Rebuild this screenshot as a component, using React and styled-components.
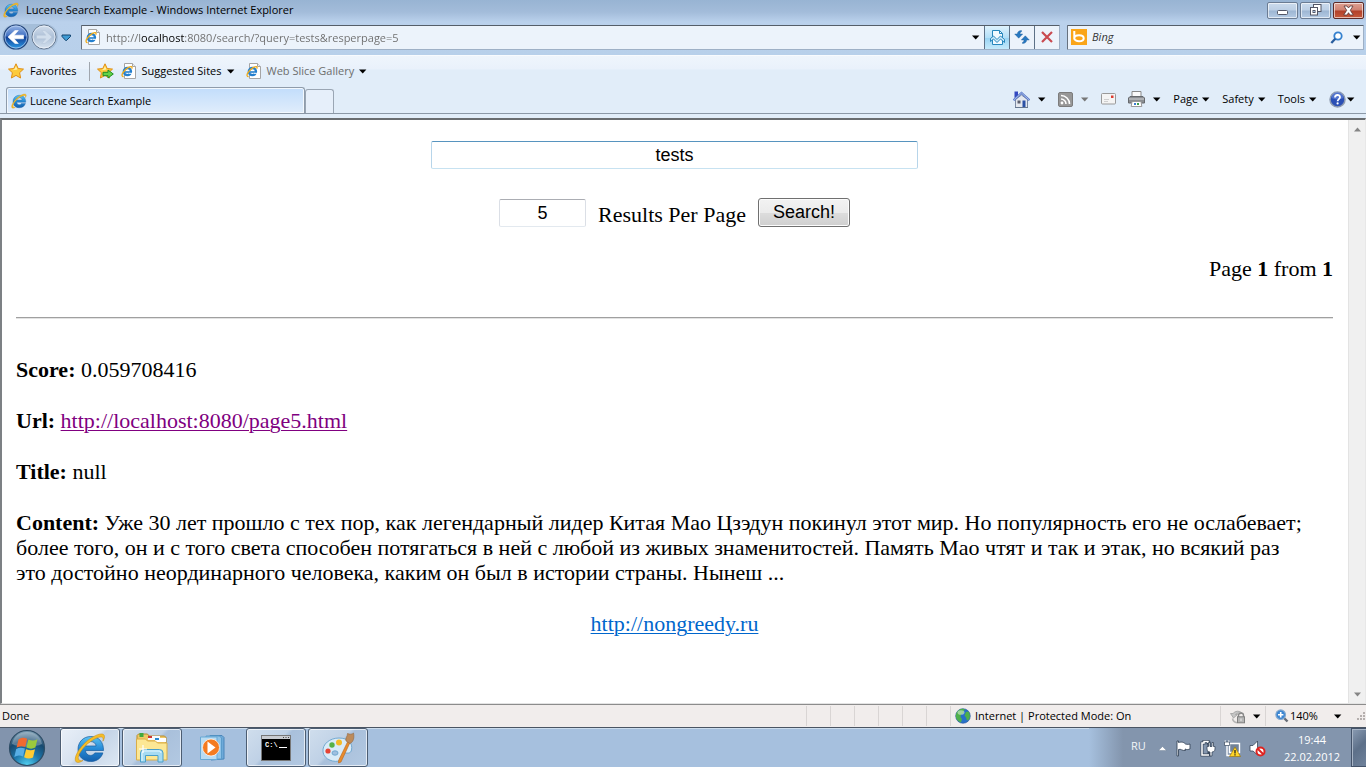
import React from "react";
import styled, { createGlobalStyle, css } from "styled-components";

const ui = `"Open Sans", "Noto Sans", sans-serif`;

const GlobalStyle = createGlobalStyle`
  * { box-sizing: border-box; }
  html, body { margin: 0; padding: 0; }
  body { background: #e1edf9; font: 11px/16px ${ui}; color: #000; }
  button, input { font: inherit; color: inherit; margin: 0; }
  svg { display: block; flex: none; }
`;

const Screen = styled.div`
  display: flex;
  flex-direction: column;
  min-height: 100vh;
`;

const Glass = styled.header`
  background: linear-gradient(#98b4d3 0, #a3bcda 12px, #bad1ec 22px, #b8d0ea 100%);
`;

const TitleBar = styled.div`
  display: flex;
  align-items: center;
  height: 22px;
  padding: 0 2px 2px 3px;
`;

const Title = styled.h1`
  flex: 1;
  margin: 0 0 0 7px;
  font: inherit;
`;

const WindowButton = styled.button`
  display: flex;
  align-items: center;
  justify-content: center;
  width: 31px;
  height: 17px;
  margin-left: 2px;
  padding: 0;
  border: 1px solid #6b7c93;
  border-radius: 2px;
  box-shadow: inset 0 0 0 1px rgba(255, 255, 255, 0.6);
  background: ${(p) =>
    p.$close
      ? "linear-gradient(#dfa193 0, #cf8272 7px, #b2402a 8px, #c65a3d 100%)"
      : "linear-gradient(#cbdbed 0, #bccfe5 7px, #9db6d3 8px, #b5cbe4 100%)"};
  ${(p) => p.$close && css`border-color: #5d2a28;`}
`;

const NavRow = styled.div`
  display: flex;
  align-items: center;
  height: 33px;
  padding: 0 2px 3px 2px;
`;

const IconButton = styled.button`
  display: flex;
  align-items: center;
  justify-content: center;
  padding: 0;
  border: 0;
  background: none;
`;

const NavPair = styled.div`
  display: flex;
  gap: 2px;
  padding: 0 1px;
  border-radius: 13px;
  background: rgba(160, 185, 213, 0.8);
`;

const Field = styled.div`
  display: flex;
  align-items: center;
  height: 25px;
  border: 1px solid;
  border-color: #555e69 #9eb0c6 #9eb0c6 #66717f;
  background: #ecf3fb;
  border-radius: 1px;
`;

const AddressField = styled(Field)`
  flex: 1;
  margin-left: 7px;
  padding-left: 3px;
`;

const AddressInput = styled.input`
  flex: 1;
  min-width: 0;
  height: 21px;
  margin-left: 5px;
  padding: 0;
  border: 0;
  outline: 0;
  color: transparent;
  caret-color: #000;
  background: linear-gradient(90deg, #6d6d6d 35px, #000 35px, #000 79px, #6d6d6d 79px);
  -webkit-background-clip: text;
  background-clip: text;
`;

const FieldButton = styled(IconButton)`
  width: 25px;
  height: 23px;
  border-left: 1px solid #5d7187;
  ${(p) => p.$lit && css`background: linear-gradient(#dff2fd, #b3e0f8 50%, #98d3f3 51%, #c5eafb);`}
`;

const SearchField = styled(Field)`
  width: 297px;
  margin-left: 7px;
  padding: 0 2px 0 3px;
`;

const BingInput = styled.input`
  flex: 1;
  min-width: 0;
  margin-left: 5px;
  padding: 0;
  border: 0;
  outline: 0;
  background: none;
  font-style: italic;
  &::placeholder { color: #333; opacity: 1; }
`;

const Bars = styled.nav`
  border-top: 1px solid #f8fbfe;
  background: linear-gradient(#eff5fc 0, #e9f1fb 13px, #e1edf9 14px, #e1edf9 100%);
`;

const FavoritesBar = styled.div`
  display: flex;
  align-items: center;
  height: 31px;
  padding: 0 8px 1px;
`;

const BarButton = styled.button`
  display: flex;
  align-items: center;
  gap: 5px;
  padding: 0;
  border: 0;
  background: none;
  color: ${(p) => (p.$dim ? "#6d6d6d" : "#000")};
`;

const BarRule = styled.span`
  width: 1px;
  height: 19px;
  margin: 0 7px 0 12px;
  background: #a0a6ae;
`;

const FavoriteLinks = styled.div`
  display: flex;
  gap: 11px;
  margin-left: 7px;
`;

const TabRow = styled.div`
  display: flex;
  align-items: flex-end;
  height: 27px;
  padding: 0 11px 0 6px;
  border-bottom: 1px solid #8b98a6;
`;

const Tab = styled.button`
  display: flex;
  align-items: center;
  gap: 3px;
  width: 299px;
  height: 26px;
  padding: 0 4px;
  border: 1px solid #8f9cab;
  border-bottom: 0;
  border-radius: 3px 3px 0 0;
  box-shadow: inset 0 0 0 1px #f2f8fe;
  background: linear-gradient(#c2ddfb, #e0edfb);
`;

const NewTab = styled.button`
  width: 29px;
  height: 24px;
  padding: 0;
  border: 1px solid #9aa6b4;
  border-bottom: 0;
  border-radius: 3px 3px 0 0;
  background: #e6effa;
`;

const CommandBar = styled.div`
  display: flex;
  align-items: center;
  height: 26px;
  margin-left: auto;
  padding-bottom: 2px;
  gap: 12px;
`;

const CommandButton = styled(BarButton)`
  gap: ${(p) => (p.$wide ? 8 : p.$tight ? 1 : 4)}px;
`;

const Frame = styled.main`
  flex: 1;
  display: flex;
  margin-top: 4px;
  border: 1px solid #7c8084;
  border-top: 2px solid #696d70;
  border-right-color: #e8e8e8;
  border-bottom-color: #e3e3e3;
  border-left-width: 2px;
  background: #fff;
`;

const Page = styled.div`
  flex: 1;
  min-width: 0;
  padding: 21px 15px 14px 14px;
  font: 22px/25px "Liberation Serif", serif;
`;

const ScrollTrack = styled.div`
  display: flex;
  flex-direction: column;
  justify-content: space-between;
  width: 17px;
  padding: 3px 0;
  border-left: 1px solid #e3e3e3;
  background: #f0f0f0;
`;

const ScrollButton = styled(IconButton)`
  height: 12px;
`;

const SearchForm = styled.form`
  display: flex;
  flex-direction: column;
  align-items: center;
  gap: 29px;
  font: 18px/22px "Liberation Sans", sans-serif;
`;

const TextBox = styled.input`
  width: ${(p) => (p.$small ? 87 : 487)}px;
  height: 28px;
  padding: 0 2px;
  border: 1px solid;
  border-color: ${(p) => (p.$small ? "#abadb3 #dbdfe6 #e3e9ef #dbdfe6" : "#5794bf #b7d5ea #c7e2f1 #b7d5ea")};
  border-radius: 2px;
  outline: 0;
  text-align: center;
`;

const FormRow = styled.div`
  display: flex;
  align-items: flex-end;
  gap: 12px;
`;

const Label = styled.label`
  font: 22px/25px "Liberation Serif", serif;
`;

const Submit = styled.button`
  width: 92px;
  height: 29px;
  padding: 0 0 2px;
  border: 1px solid #707070;
  border-radius: 3px;
  box-shadow: inset 0 0 0 1px #fcfcfc;
  background: linear-gradient(#f2f2f2, #ebebeb 50%, #dddddd 51%, #cfcfcf);
`;

const Pager = styled.p`
  margin: 29px 0 36px;
  text-align: right;
`;

const Divider = styled.hr`
  height: 2px;
  margin: 0;
  border: 0;
  border-top: 1px solid #a0a0a0;
  border-bottom: 1px solid #e3e3e3;
`;

const Results = styled.section`
  display: flex;
  flex-direction: column;
  gap: 26px;
  margin-top: 38px;
`;

const Line = styled.p`
  margin: 0;
  text-align: ${(p) => (p.$center ? "center" : "left")};
`;

const Excerpt = styled(Line)`
  padding-right: 24px;
`;

const Link = styled.a`
  color: ${(p) => (p.$visited ? "#800080" : "#0066cc")};
  text-decoration: underline;
  text-decoration-thickness: 1px;
  text-underline-offset: 2px;
`;

const StatusBar = styled.footer`
  display: flex;
  align-items: center;
  height: 23px;
  border-top: 1px solid #8c8c8c;
  background: #f1edec;
`;

const StatusText = styled.span`
  flex: 1;
  padding-left: 2px;
`;

const StatusCell = styled.div`
  display: flex;
  align-items: center;
  gap: 4px;
  width: ${(p) => p.$w || 24}px;
  height: 20px;
  padding-left: ${(p) => (p.$w ? 4 : 0)}px;
  border-left: 1px solid #d9d5d4;
`;

const StatusButton = styled(BarButton)`
  gap: ${(p) => p.$gap}px;
  padding-left: 5px;
`;

const Taskbar = styled.footer`
  display: flex;
  height: 40px;
  border-top: 1px solid #4b5563;
  box-shadow: inset 0 1px 0 #cbdced;
  background: #a6c0de;
`;

const StartZone = styled.div`
  display: flex;
  align-items: center;
  width: 60px;
  padding-left: 8px;
  background: #8294ad;
`;

const Tasks = styled.div`
  flex: 1;
  display: flex;
  gap: 2px;
`;

const TaskButton = styled.button`
  display: flex;
  align-items: center;
  justify-content: center;
  width: 60px;
  height: 39px;
  padding: 0;
  border: 1px solid transparent;
  border-radius: 3px;
  background: none;
  ${(p) =>
    p.$open &&
    css`
      border-color: #4c5d72;
      box-shadow: inset 0 0 0 1px rgba(255, 255, 255, 0.65);
      background: ${p.$active
        ? "linear-gradient(135deg, #e9f0f8 0, #d7e2ef 45%, #c3d3e6 50%, #dde8f4 100%)"
        : "linear-gradient(135deg, #d0deed 0, #bfd1e6 45%, #a9c0db 50%, #b3c9e2 100%)"};
    `}
`;

const Tray = styled.div`
  display: flex;
  align-items: center;
  padding-left: 42px;
  color: #fff;
  background: linear-gradient(90deg, #a6c0de 0, #8395ad 34px, #8395ad 100%);
`;

const Language = styled.button`
  width: 27px;
  padding: 0 0 4px;
  border: 0;
  background: none;
  color: #f2f5f9;
  text-align: left;
`;

const TrayIcons = styled.div`
  display: flex;
  align-items: center;
  gap: 8px;
  margin-top: 2px;
`;

const Clock = styled.time`
  width: 85px;
  padding-left: 7px;
  line-height: 17px;
  text-align: center;
`;

const ShowDesktop = styled.button`
  width: 15px;
  height: 39px;
  padding: 0;
  border: 1px solid #44536a;
  border-right: 0;
  box-shadow: inset 1px 1px 0 #a8b5c6;
  background: linear-gradient(135deg, #8b9cb3, #5d7089 50%, #6f829b);
`;

const Caret = ({ color = "#000" }) => (
  <svg width="8" height="5" viewBox="0 0 8 5"><path d="M0 .5h7.4L3.7 4.5z" fill={color} /></svg>
);

const IeLogo = ({ size = 16 }) => (
  <svg width={size} height={size} viewBox="0 0 32 32">
    <defs>
      <linearGradient id="ieBlue" x1="0" y1="0" x2="0" y2="1">
        <stop offset="0" stopColor="#5cc3f2" /><stop offset=".5" stopColor="#2489d6" /><stop offset="1" stopColor="#1560ad" />
      </linearGradient>
    </defs>
    <path d="M29.5 18.5H11.4c.3 3 2.2 4.9 5 4.9 2 0 3.500-.9 4.400-2.500h8.100C27.200 26.200 22.800 29.500 16.700 29.500 9.100 29.500 4 24.500 4 17.300 4 9.900 9.400 4.500 16.800 4.500c8 0 12.900 5.600 12.700 14zM11.500 14h10.600c-.3-2.700-2.300-4.400-5.200-4.400S12.100 11.300 11.500 14z" fill="url(#ieBlue)" stroke="#175b9e" strokeWidth=".7" />
    <path d="M9 28.500C5 31.300 1.800 31 1.300 28.300.3 23.200 7.500 12.300 17.500 5.800 23.500 1.900 29 .8 30.200 3.300c.7 1.600.1 3.700-1.300 5.900.4-2 .3-3.300-.7-3.900-2-1.100-7 .9-11.700 4.300C8.700 15.200 3.300 23.500 4.400 27c.6 1.700 2.300 2 4.600 1.500z" fill="#f5bd27" stroke="#c98b10" strokeWidth=".5" />
  </svg>
);

const IePage = () => (
  <svg width="16" height="16" viewBox="0 0 16 16">
    <path d="M3.500 .5h8l3 3v12h-11z" fill="#fff" stroke="#a5a5a5" />
    <path d="M11.500 .5v3h3" fill="#eee" stroke="#a5a5a5" />
    <circle cx="6.400" cy="8.600" r="3.600" fill="none" stroke="#247fce" strokeWidth="2.300" />
    <path d="M3 9h8" stroke="#247fce" strokeWidth="1.600" /><path d="M8 10.300h3" stroke="#fff" strokeWidth="1" />
    <path d="M2.600 13.600C-1 13.500 2 7.500 7.500 4.400 10 3 11.800 3.300 10.700 5.700" fill="none" stroke="#efac1c" strokeWidth="1.300" />
  </svg>
);

const BackIcon = () => (
  <svg width="26" height="26" viewBox="0 0 26 26">
    <defs><linearGradient id="backBlue" x1="0" y1="0" x2="0" y2="1">
      <stop offset="0" stopColor="#9ab7e8" /><stop offset=".46" stopColor="#3f6fc1" /><stop offset=".5" stopColor="#123e94" /><stop offset="1" stopColor="#2b9ce8" />
    </linearGradient></defs>
    <circle cx="13" cy="13" r="12" fill="url(#backBlue)" stroke="#24467c" strokeWidth="1.200" />
    <circle cx="13" cy="13" r="11" fill="none" stroke="#bcd2f2" strokeWidth=".7" />
    <path d="M5 13l7-6.500h3.300L11.200 11.200H20.500v3.600H11.200l4.100 4.700H12z" fill="#fff" stroke="#fff" strokeWidth=".6" />
  </svg>
);

const ForwardIcon = () => (
  <svg width="26" height="26" viewBox="0 0 26 26">
    <defs><linearGradient id="fwdGrey" x1="0" y1="0" x2="0" y2="1">
      <stop offset="0" stopColor="#d3dfed" /><stop offset=".5" stopColor="#adc0d7" /><stop offset="1" stopColor="#d8e4f0" />
    </linearGradient></defs>
    <circle cx="13" cy="13" r="12" fill="url(#fwdGrey)" stroke="#66788f" strokeWidth="1" />
    <circle cx="13" cy="13" r="11" fill="none" stroke="#edf3fa" strokeWidth=".8" />
    <path d="M21 13l-7-6.500h-3.300l4.100 4.700H5.500v3.600h9.300l-4.100 4.700H14z" fill="#d1deec" stroke="#b4c5d9" strokeWidth=".5" />
  </svg>
);

const Star = ({ add }) => (
  <svg width="17" height="16" viewBox="0 0 17 16">
    <path d="M8 .8l2.200 4.700 5.300.6-3.900 3.600 1 5.300L8 12.400 3.400 15l1-5.300L.5 6.100l5.300-.6z" fill="#fdcb3b" stroke="#e08e16" />
    <path d="M8 3l1.400 3.400-5 .8L6.500 6z" fill="#fff0a8" />
    {add && <path d="M6 9.300h5V7l5.300 4-5.300 4v-2.300H6z" fill="#62d34a" stroke="#218c22" />}
  </svg>
);

const Compat = () => (
  <svg width="17" height="17" viewBox="0 0 17 17" fill="none" stroke="#2787bd">
    <path d="M3.500 1.500h7l3 3v11h-10z" fill="#f2faff" />
    <path d="M10.500 1.500v3h3" />
    <path d="M1.500 9.500l3-2.500 3.500 3.500L11.500 7l4 3.500v3L11.500 10 8 13.500 4.500 10l-3 2.500z" fill="#cdeafa" />
  </svg>
);

const Refresh = () => (
  <svg width="16" height="16" viewBox="0 0 16 16" fill="#2878c0" stroke="#185a9b" strokeWidth=".4">
    <path d="M7.500 1.500C5 1.500 3.500 2.800 3.300 5H.7l4 4.200L8.700 5H6c0-1.200.5-1.900 1.500-2.300z" />
    <path d="M8.500 14.500c2.500 0 4-1.300 4.200-3.500h2.600l-4-4.200L7.300 11H10c0 1.200-.5 1.900-1.500 2.300z" />
  </svg>
);

const Stop = () => (
  <svg width="14" height="14" viewBox="0 0 14 14"><path d="M2 2l10 10M12 2L2 12" stroke="#c94a50" strokeWidth="2.200" /></svg>
);

const Bing = () => (
  <svg width="16" height="16" viewBox="0 0 16 16">
    <rect width="16" height="16" fill="#faa519" />
    <path d="M3.300 2v8.300M3.300 9.200c0-4 9.400-4 9.400 0s-9.400 4-9.400 0z" fill="none" stroke="#fff" strokeWidth="2" />
  </svg>
);

const Magnifier = () => (
  <svg width="13" height="13" viewBox="0 0 13 13" fill="none">
    <circle cx="8" cy="5" r="3.700" fill="#fff" stroke="#3481cf" strokeWidth="1.800" /><path d="M5.300 7.800L1.300 12" stroke="#285d9e" strokeWidth="2.300" />
  </svg>
);

const Minimize = () => (
  <svg width="12" height="11" viewBox="0 0 12 11"><rect x=".5" y="5.500" width="10" height="4" rx="1" fill="#fff" stroke="#535666" /></svg>
);
const Restore = () => (
  <svg width="13" height="12" viewBox="0 0 13 12" fill="#fff" stroke="#535666">
    <rect x="4.500" y=".5" width="7.500" height="7" /><rect x="1.500" y="3.500" width="7" height="7.500" /><rect x="4" y="6.500" width="2" height="2" fill="#9eb7d4" />
  </svg>
);
const Close = () => (
  <svg width="13" height="11" viewBox="0 0 13 11">
    <path d="M2 1h3l1.500 2L8 1h3L8.300 5.300 11.300 10H8L6.500 7.700 5 10H1.700l3-4.700z" fill="#fff" stroke="#573234" strokeWidth=".8" />
  </svg>
);

const Home = () => (
  <svg width="17" height="17" viewBox="0 0 17 17">
    <path d="M2.500 8.500L8.500 4l6 4.500v8h-12z" fill="#e4e8ef" stroke="#7c8aa3" />
    <path d="M1.500 .5h3.500v4L1.500 7z" fill="#3348c0" />
    <path d="M.5 9.300L8.500 2l8 7.300" fill="none" stroke="#5a78c8" strokeWidth="2.200" />
    <path d="M.5 9.300L8.500 2l8 7.300" fill="none" stroke="#c4d4f5" strokeWidth=".7" />
    <path d="M9.500 9.500h3V16h-3z" fill="#2b51a5" /><path d="M4.500 9.500h3v3h-3z" fill="#5c606e" />
    <path d="M2 16.500h13" stroke="#65778f" />
  </svg>
);
const Feed = () => (
  <svg width="15" height="15" viewBox="0 0 15 15">
    <rect x=".5" y=".5" width="14" height="14" rx="1.500" fill="#979797" stroke="#7c7c7c" />
    <circle cx="4" cy="11" r="1.400" fill="#fff" /><path d="M3 7a5 5 0 015 5M3 3.500a8.500 8.500 0 018.500 8.500" fill="none" stroke="#fff" strokeWidth="1.600" />
  </svg>
);
const Mail = () => (
  <svg width="15" height="12" viewBox="0 0 15 12">
    <rect x=".5" y=".5" width="14" height="10.500" rx="1" fill="#f4f4f4" stroke="#999" /><path d="M10 2.500h2.500V5H10z" fill="#dd3c32" /><path d="M3 6.500h5M3 8.500h4" stroke="#cfcfcf" />
  </svg>
);
const Printer = () => (
  <svg width="17" height="16" viewBox="0 0 17 16">
    <path d="M4 .5h9V6H4z" fill="#fafafa" stroke="#888" /><path d="M.5 7L2 5.500h13L16.500 7v5H.5z" fill="#8b8e92" stroke="#66696d" />
    <path d="M1 8h15" stroke="#d3d5d8" /><path d="M4 10.500h9l.8 5H3.200z" fill="#fff" stroke="#999" />
    <path d="M6 12h2v2H6z" fill="#3a7bd0" /><path d="M9 12h2v2H9z" fill="#3d9c4d" />
  </svg>
);
const Help = () => (
  <svg width="17" height="17" viewBox="0 0 17 17">
    <circle cx="8.500" cy="8.500" r="7.500" fill="#2a4fb5" stroke="#8e9bb0" strokeWidth="1.500" />
    <path d="M2.500 7a6 6 0 0112 0c-3 1.500-8 2-12 0z" fill="#6c8ce0" opacity=".6" />
    <path d="M6 6.500c0-3.300 5-3.300 5-.3 0 1.800-2.400 2-2.400 4" fill="none" stroke="#fff" strokeWidth="1.800" /><circle cx="8.600" cy="12.400" r="1.100" fill="#fff" />
  </svg>
);

const ScrollArrow = ({ down }) => (
  <svg width="7" height="5" viewBox="0 0 7 5"><path d={down ? "M0 .5h7L3.500 4.500z" : "M0 4.500h7L3.500 .5z"} fill="#858585" /></svg>
);

const Globe = () => (
  <svg width="16" height="16" viewBox="0 0 16 16">
    <circle cx="8" cy="8" r="7.300" fill="#2870c8" stroke="#27569a" strokeWidth=".6" />
    <path d="M4 2C6 .5 9 .6 10 1.500L8.500 3.500 9 5 6 6.500 5.500 9 7 11l-1 3.500C3 13.500.8 11 .8 8c0-2 1-4.500 3.200-6zM11 4l2.500-.5c1.500 2 2 5.500.5 8l-2 1-1-3-1.500-2z" fill="#4fb04b" />
    <ellipse cx="6" cy="4.500" rx="3.500" ry="2.300" fill="#fff" opacity=".45" />
  </svg>
);
const PrivacyLock = () => (
  <svg width="16" height="15" viewBox="0 0 16 15">
    <path d="M12 4A6 6 0 003 4.500L.5 4.500 3.500 9l4-3.500H5.500C7 3.500 9.500 4 11 5z" fill="#c5c5c5" stroke="#9e9e9e" strokeWidth=".8" />
    <path d="M2.500 9.500C3 12 5 13.500 7 13.800" fill="none" stroke="#b5b5b5" strokeWidth="1.500" />
    <path d="M8.500 8V6.500a2.500 2.500 0 015 0V8" fill="none" stroke="#888" strokeWidth="1.400" /><rect x="7.500" y="7.800" width="7" height="6" fill="#b5b5b5" stroke="#808080" /><path d="M11 9.500v2.500" stroke="#eee" />
  </svg>
);
const ZoomIcon = () => (
  <svg width="14" height="14" viewBox="0 0 14 14">
    <path d="M8.500 8.500l4 4" stroke="#666b75" strokeWidth="2.400" /><circle cx="5.700" cy="5.700" r="4.800" fill="#3c86d2" stroke="#85a9cf" strokeWidth="1.200" /><path d="M3 5.700h5.400M5.700 3v5.400" stroke="#fff" strokeWidth="1.600" />
  </svg>
);
const Grip = () => (
  <svg width="9" height="9" viewBox="0 0 9 9" fill="#b5afae"><path d="M6 0h2v2H6zM3 3h2v2H3zM6 3h2v2H6zM0 6h2v2H0zM3 6h2v2H3zM6 6h2v2H6z" /></svg>
);

const StartOrb = () => (
  <svg width="38" height="38" viewBox="0 0 38 38">
    <defs><radialGradient id="orb" cx=".5" cy="1" r=".95">
      <stop offset="0" stopColor="#54d3f3" /><stop offset=".4" stopColor="#1d78ad" /><stop offset=".75" stopColor="#17496f" /><stop offset="1" stopColor="#7093ab" />
    </radialGradient></defs>
    <circle cx="19" cy="19" r="17.500" fill="url(#orb)" stroke="#2d4c65" strokeWidth="1.200" />
    <path d="M4 15C5.500 7 12 3 19 3s13.500 4 15 12c-6 3.500-24 3.500-30 0z" fill="#fff" opacity=".28" />
    <path d="M10.500 10.500c2.700-1.900 5.300-2.200 8.700-.7l-2 8.200c-3.200-1.400-5.900-1-8.600.6z" fill="#ef6a31" />
    <path d="M20.400 10.400c3.300 1.500 6 1.500 9-.2l-2 8.300c-3 1.600-5.800 1.500-9 0z" fill="#9bca3c" />
    <path d="M8.200 20.100c2.800-1.700 5.400-1.900 8.700-.5L15 27.500c-3.200-1.500-5.900-1.300-8.700.5z" fill="#58aee5" />
    <path d="M18.100 20.200c3.100 1.500 5.900 1.600 8.900 0l-2 8.200c-2.900 1.600-5.700 1.400-8.900-.1z" fill="#fecb33" />
  </svg>
);
const Explorer = () => (
  <svg width="34" height="32" viewBox="0 0 34 32">
    <path d="M2 5V3.500L3.500 2h9L14 4h15.500L31 5.500V27H2z" fill="#efc967" stroke="#b88c2d" />
    <path d="M4.500 1h4v4h-4z" fill="#41a83e" /><path d="M13 4h12v4H13z" fill="#f7fafc" /><path d="M13 4h4v2h-4z" fill="#cf3530" /><path d="M20 6h11v4H20z" fill="#fff" /><path d="M20 6h4v2h-4z" fill="#2687d2" />
    <path d="M1.500 7h9l2 2h8l2 2h9.500v17h-30.500z" fill="#fce794" stroke="#d9ad48" />
    <path d="M5.500 30V21q0-3.500 3.500-3.500h15.500q3.500 0 3.500 3.500v9h-5v-6.500h-12.500V30z" fill="#a6dbf2" stroke="#4a9fc9" />
    <path d="M7 29v-8q0-2 2-2h15q2 0 2 2" fill="none" stroke="#e6f8ff" />
    <path d="M8 13v8M4 17h8" stroke="#fff" strokeWidth="1.200" />
  </svg>
);
const MediaPlayer = () => (
  <svg width="32" height="28" viewBox="0 0 32 28">
    <path d="M12 1.500h12l2 2V25l-13 1z" fill="#6eaad9" stroke="#4a86ba" /><path d="M8 2h13.500l2 2v21H8z" fill="#8fc3e8" stroke="#5b9ccb" />
    <path d="M2.500 3H19v22.500H2.500z" fill="#b9dcf3" stroke="#69a9d5" />
    <circle cx="13" cy="13.500" r="8.500" fill="#f47b20" stroke="#fff" strokeWidth=".7" /><path d="M9.500 7.500l8 6-8 6z" fill="#fff" />
  </svg>
);
const Console = () => (
  <svg width="30" height="26" viewBox="0 0 30 26">
    <rect x=".5" y=".5" width="29" height="25" fill="#000" stroke="#777" /><path d="M1 1h28v3H1z" fill="#c9ccd1" /><path d="M22 2.500h1M24.500 2.500h1M27 2.500h1" stroke="#444" />
    <text x="4" y="12" fill="#fff" fontFamily="Liberation Mono" fontSize="7" fontWeight="bold">C:\</text><path d="M18 12.500h8" stroke="#fff" />
  </svg>
);
const Paint = () => (
  <svg width="34" height="32" viewBox="0 0 34 32">
    <path d="M2 20C1 12 9 6 18 6s14 5 12.500 12c-1 4-4 3-6.500 3-4 0-2 5-5 7.500C14 31 3 28 2 20z" fill="#d9ebf8" stroke="#72a9d0" />
    <ellipse cx="14" cy="21" rx="3" ry="2.200" fill="#9fbfe0" stroke="#72a9d0" />
    <circle cx="7" cy="19" r="2.600" fill="#e54434" /><circle cx="11" cy="13" r="2.700" fill="#56b146" /><circle cx="18" cy="10.500" r="3" fill="#f5ba27" />
    <path d="M27 9l2 1.500L20 30l-2.500 1 .2-2.800z" fill="#e88b2c" stroke="#b86518" strokeWidth=".6" />
    <path d="M25 9c-1-3 1.500-4 1.500-7.500C29 2.500 31 2.500 32.500 1c1 4.500 0 9-3.500 10.500z" fill="#bd8b5b" stroke="#94673e" strokeWidth=".6" />
  </svg>
);

const TrayArrow = () => (
  <svg width="9" height="5" viewBox="0 0 9 5"><path d="M.5 4.500L4.500 .5l4 4z" fill="#fff" stroke="#63748c" strokeWidth=".4" /></svg>
);
const Flag = () => (
  <svg width="17" height="17" viewBox="0 0 17 17"><path d="M2 1v15h1.500V9.500c2.500-1 3.500 1.500 7 1l-.5-1.500c2 1 3.500.5 5 0V4c-2 .5-2.500.5-4.500 0C8 1.500 6 2 3.500 2.500V1z" fill="#fff" stroke="#38475b" strokeWidth=".9" /></svg>
);
const Power = () => (
  <svg width="16" height="17" viewBox="0 0 16 17">
    <path d="M2 3h2V1.500h4V3h1v12H2z" fill="none" stroke="#38475b" strokeWidth="3" /><path d="M9 15H2V3h2V1.500h4V3" fill="none" stroke="#fff" strokeWidth="1.500" />
    <path d="M7 6.500V9c0 2 1.300 3 3 3v4h2v-4c1.700 0 3-1 3-3V6.500h-1.500v-4H12v4h-2v-4H8.500v4z" fill="#fff" stroke="#38475b" strokeWidth=".8" />
  </svg>
);
const Network = () => (
  <svg width="17" height="17" viewBox="0 0 17 17">
    <path d="M5.500 3.500h10v9h-10z" fill="#718399" stroke="#fff" strokeWidth="1.400" /><path d="M3 4v11.500h5" fill="none" stroke="#fff" strokeWidth="1.400" /><path d="M1.300 .5v2M4.700 .5v2" stroke="#fff" strokeWidth="1.300" /><path d="M.5 2h5v3.500h-5z" fill="#fff" stroke="#38475b" strokeWidth=".7" />
    <path d="M11 7l5.500 9.500h-11z" fill="#ffd527" stroke="#9a7410" strokeWidth=".7" /><path d="M11 10v3.500M11 14.300v1.200" stroke="#222" strokeWidth="1.300" />
  </svg>
);
const Muted = () => (
  <svg width="17" height="17" viewBox="0 0 17 17">
    <path d="M1 5.500h3L8.500 1v14L4 11H1z" fill="#fff" stroke="#38475b" strokeWidth=".8" />
    <circle cx="11.500" cy="11.500" r="4" fill="#fff" stroke="#df2320" strokeWidth="2" /><path d="M8.800 8.800l5.500 5.500" stroke="#df2320" strokeWidth="2" />
  </svg>
);

export default function App() {
  return (
    <Screen>
      <GlobalStyle />
      <Glass>
        <TitleBar>
          <IeLogo />
          <Title>Lucene Search Example - Windows Internet Explorer</Title>
          <WindowButton aria-label="Minimize"><Minimize /></WindowButton>
          <WindowButton aria-label="Restore"><Restore /></WindowButton>
          <WindowButton $close aria-label="Close"><Close /></WindowButton>
        </TitleBar>
        <NavRow>
          <NavPair>
            <IconButton aria-label="Back"><BackIcon /></IconButton>
            <IconButton aria-label="Forward"><ForwardIcon /></IconButton>
          </NavPair>
          <IconButton aria-label="Recent pages">
            <svg width="16" height="9" viewBox="0 0 16 9"><path d="M4 2h8.500v1.500L8.500 7.500h-.8L4 3.500z" fill="#3f9bd4" stroke="#12446f" strokeWidth="1" /></svg>
          </IconButton>
          <AddressField>
            <IePage />
            <AddressInput aria-label="Address" defaultValue="http://localhost:8080/search/?query=tests&amp;resperpage=5" />
            <IconButton aria-label="Show address list"><svg width="14" height="5" viewBox="0 0 14 5"><path d="M2 .5h7.400L5.700 4.500z" /></svg></IconButton>
            <FieldButton $lit aria-label="Compatibility View"><Compat /></FieldButton>
            <FieldButton aria-label="Refresh"><Refresh /></FieldButton>
            <FieldButton aria-label="Stop"><Stop /></FieldButton>
          </AddressField>
          <SearchField>
            <Bing />
            <BingInput aria-label="Search the web" placeholder="Bing" />
            <IconButton aria-label="Search"><Magnifier /></IconButton>
            <IconButton aria-label="Search options"><svg width="18" height="5" viewBox="0 0 18 5"><path d="M10 .5h7.400L13.700 4.500z" /></svg></IconButton>
          </SearchField>
        </NavRow>
      </Glass>

      <Bars>
        <FavoritesBar>
          <BarButton $tight><Star />Favorites</BarButton>
          <BarRule />
          <IconButton aria-label="Add to Favorites Bar"><Star add /></IconButton>
          <FavoriteLinks>
            <BarButton><IePage />Suggested Sites<Caret /></BarButton>
            <BarButton $dim><IePage />Web Slice Gallery<Caret /></BarButton>
          </FavoriteLinks>
        </FavoritesBar>
        <TabRow>
          <Tab><IeLogo />Lucene Search Example</Tab>
          <NewTab aria-label="New Tab" />
          <CommandBar>
            <CommandButton $wide aria-label="Home"><Home /><Caret /></CommandButton>
            <CommandButton $wide aria-label="Feeds"><Feed /><Caret color="#777" /></CommandButton>
            <CommandButton aria-label="Read Mail"><Mail /></CommandButton>
            <CommandButton $wide aria-label="Print"><Printer /><Caret /></CommandButton>
            <CommandButton>Page<Caret /></CommandButton>
            <CommandButton>Safety<Caret /></CommandButton>
            <CommandButton>Tools<Caret /></CommandButton>
            <CommandButton $tight aria-label="Help"><Help /><Caret /></CommandButton>
          </CommandBar>
        </TabRow>
      </Bars>

      <Frame>
        <Page>
          <SearchForm onSubmit={(e) => e.preventDefault()}>
            <TextBox aria-label="Query" name="query" defaultValue="tests" />
            <FormRow>
              <TextBox $small id="resperpage" name="resperpage" defaultValue="5" />
              <Label htmlFor="resperpage">Results Per Page</Label>
              <Submit type="submit">Search!</Submit>
            </FormRow>
          </SearchForm>
          <Pager>Page <b>1</b> from <b>1</b></Pager>
          <Divider />
          <Results>
            <Line><b>Score:</b> 0.059708416</Line>
            <Line><b>Url:</b> <Link $visited href="http://localhost:8080/page5.html">http://localhost:8080/page5.html</Link></Line>
            <Line><b>Title:</b> null</Line>
            <Excerpt><b>Content:</b> Уже 30 лет прошло с тех пор, как легендарный лидер Китая Мао Цзэдун покинул этот мир. Но популярность его не ослабевает; более того, он и с того света способен потягаться в ней с любой из живых знаменитостей. Память Мао чтят и так и этак, но всякий раз это достойно неординарного человека, каким он был в истории страны. Нынеш ...</Excerpt>
            <Line $center><Link href="http://nongreedy.ru">http://nongreedy.ru</Link></Line>
          </Results>
        </Page>
        <ScrollTrack>
          <ScrollButton aria-label="Scroll up"><ScrollArrow /></ScrollButton>
          <ScrollButton aria-label="Scroll down"><ScrollArrow down /></ScrollButton>
        </ScrollTrack>
      </Frame>

      <StatusBar>
        <StatusText>Done</StatusText>
        {[0, 1, 2, 3, 4, 5].map((n) => <StatusCell key={n} />)}
        <StatusCell $w={270}><Globe />Internet | Protected Mode: On</StatusCell>
        <StatusCell $w={45}><StatusButton $gap={7} aria-label="Privacy"><PrivacyLock /><Caret /></StatusButton></StatusCell>
        <StatusCell $w={92}><StatusButton $gap={1}><ZoomIcon />140%</StatusButton><IconButton aria-label="Zoom level"><svg width="22" height="5" viewBox="0 0 22 5"><path d="M12 .5h7.400L15.700 4.500z" /></svg></IconButton></StatusCell>
        <Grip />
      </StatusBar>

      <Taskbar>
        <StartZone><IconButton aria-label="Start"><StartOrb /></IconButton></StartZone>
        <Tasks>
          <TaskButton $open $active aria-label="Internet Explorer"><IeLogo size={32} /></TaskButton>
          <TaskButton $open aria-label="Windows Explorer"><Explorer /></TaskButton>
          <TaskButton aria-label="Windows Media Player"><MediaPlayer /></TaskButton>
          <TaskButton $open aria-label="Command Prompt"><Console /></TaskButton>
          <TaskButton $open aria-label="Paint"><Paint /></TaskButton>
        </Tasks>
        <Tray>
          <Language>RU</Language>
          <TrayIcons>
            <IconButton aria-label="Show hidden icons"><TrayArrow /></IconButton>
            <IconButton aria-label="Action Center"><Flag /></IconButton>
            <IconButton aria-label="Power"><Power /></IconButton>
            <IconButton aria-label="Network"><Network /></IconButton>
            <IconButton aria-label="Volume"><Muted /></IconButton>
          </TrayIcons>
          <Clock>19:44<br />22.02.2012</Clock>
          <ShowDesktop aria-label="Show desktop" />
        </Tray>
      </Taskbar>
    </Screen>
  );
}
